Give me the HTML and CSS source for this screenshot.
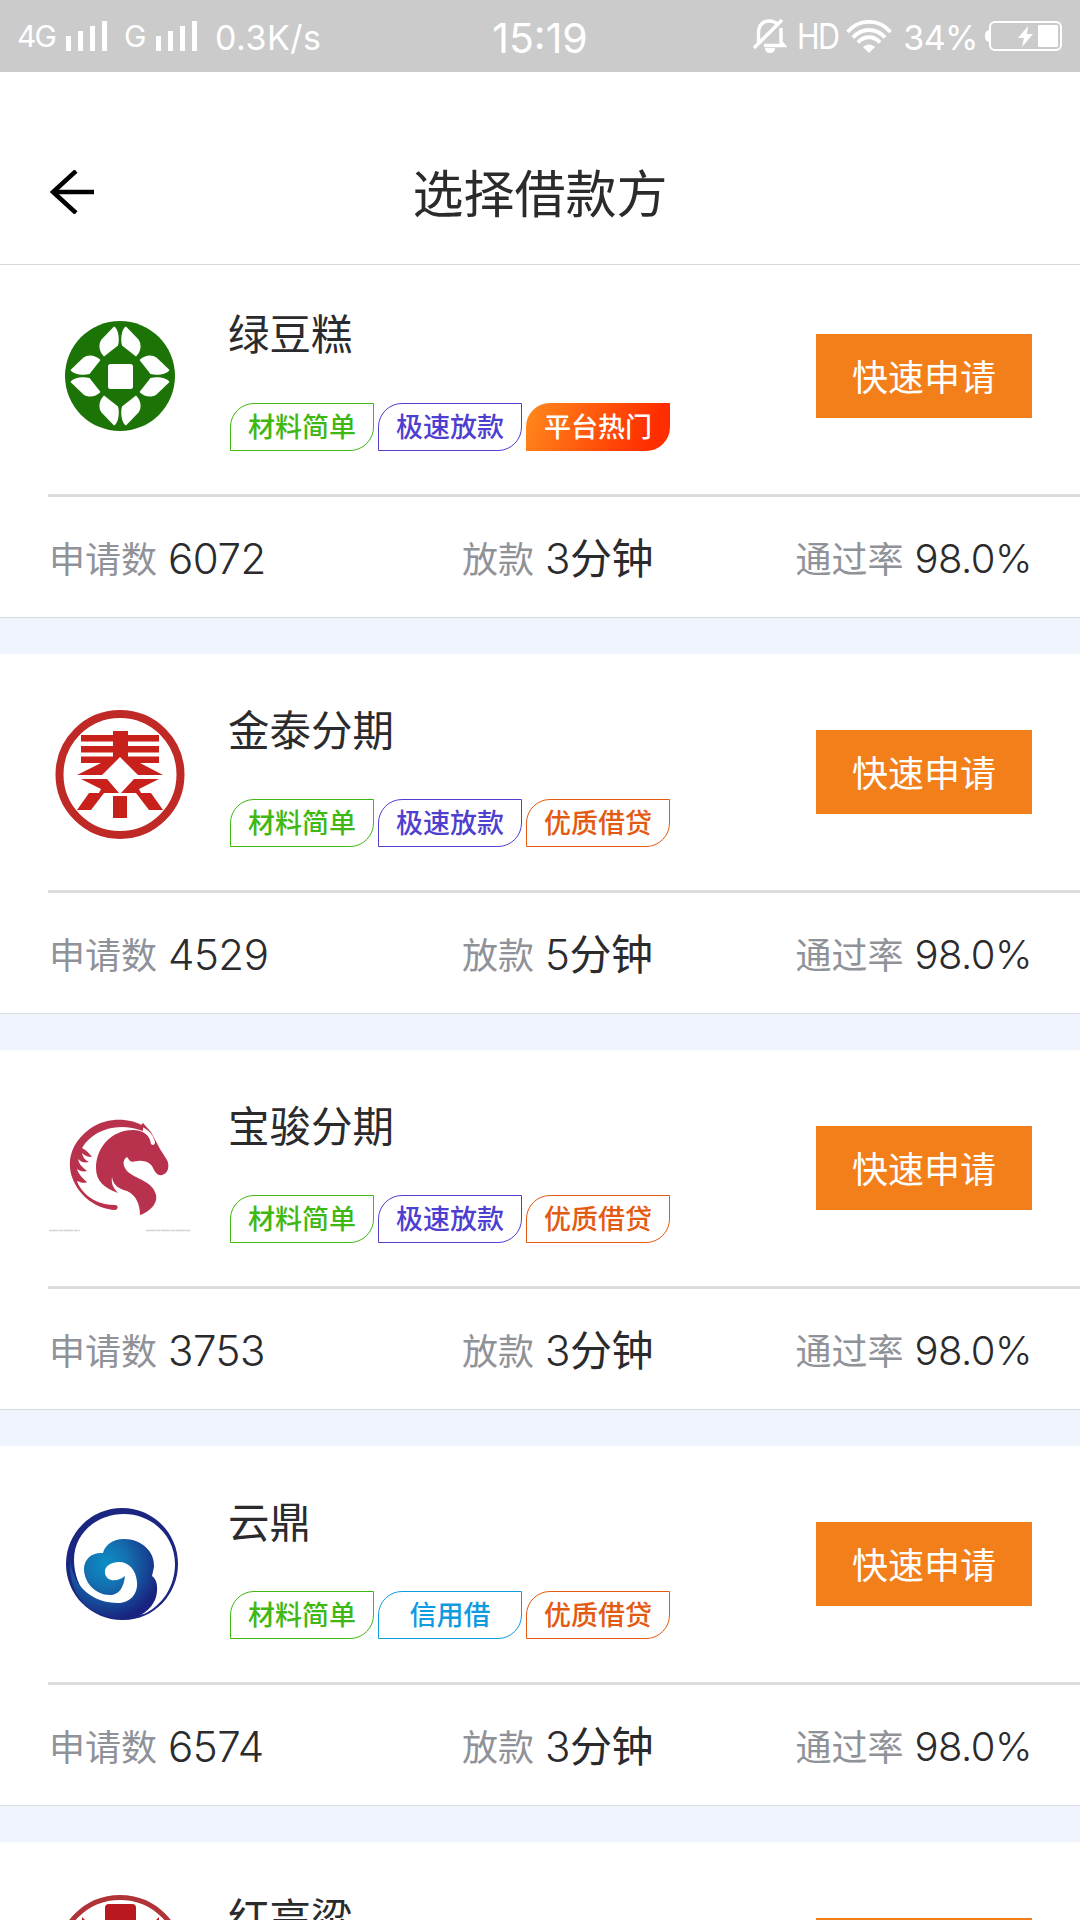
FILE: index.html
```html
<!DOCTYPE html>
<html lang="zh-CN">
<head>
    <meta charset="UTF-8">
    <meta name="viewport" content="width=device-width, initial-scale=1.0">
    <title>选择借款方</title>
    <link rel="stylesheet" href="styles.css">
</head>
<body>

<!-- status bar -->
<div class="status-bar">
    <div class="status-left">
        <span class="net">4G</span>
        <svg class="signal" width="42" height="30" viewBox="0 0 42 30"><path d="M0 15h5v15H0zM12 10h5v20h-5zM24 5h5v25h-5zM36 0h5v30h-5z"/></svg>
        <span class="net net-2">G</span>
        <svg class="signal" width="42" height="30" viewBox="0 0 42 30"><path d="M0 15h5v15H0zM12 10h5v20h-5zM24 5h5v25h-5zM36 0h5v30h-5z"/></svg>
        <span class="speed">0.3K/s</span>
    </div>
    <span class="clock">15:19</span>
    <div class="status-right">
        <svg class="bell" width="34" height="34" viewBox="0 0 34 34">
            <path d="M5.500 24V14C5.500 6 10 2 16 2c4 0 7 1.500 9 4M28 9v14l3 3.500H11" fill="none" stroke="#fff" stroke-width="3.400"/>
            <path d="M1 29L29 1" stroke="#fff" stroke-width="3.400"/>
            <path d="M12 29h10c0 3-2 5-5 5s-5-2-5-5z" fill="#fff"/>
        </svg>
        <span class="hd">HD</span>
        <svg class="wifi" width="46" height="33" viewBox="0 0 46 33">
            <g fill="none" stroke="#fff" stroke-width="3.800">
                <path d="M1.500 12C13-1.500 33-1.500 44.500 12"/>
                <path d="M7 17.500c9-10 23-10 32 0"/>
                <path d="M12 22.500c6-7 16-7 22 0"/>
            </g>
            <path d="M17 27c3.500-3.500 8.500-3.500 12 0l-6 6z" fill="#fff"/>
        </svg>
        <span class="percent">34%</span>
        <svg class="battery" width="78" height="30" viewBox="0 0 78 30">
            <rect x="5" y="1" width="71" height="28" rx="5" fill="none" stroke="#fff" stroke-width="2"/>
            <path d="M4 9v12C1 20 0 18.500 0 15s1-5 4-6z" fill="#fff"/>
            <rect x="53" y="4" width="20" height="22" rx="1" fill="#fff"/>
            <path d="M43 5L33 17h6l-2 9 11-13h-6z" fill="#fff"/>
        </svg>
    </div>
</div>

<header class="header">
    <svg class="back" width="46" height="44" viewBox="0 0 46 44">
        <path d="M27 1L4 22l23 21M3 22h42" fill="none" stroke="#000" stroke-width="4.500"/>
    </svg>
    <h1>选择借款方</h1>
</header>

<main class="list">
    <section class="card">
        <div class="card-top">
            <svg class="logo" viewBox="0 0 144 144">
                <circle cx="72" cy="72" r="55" fill="#1d7406"/>
                <rect x="60" y="60" width="25" height="25" rx="2.500" fill="#fff"/>
                <g fill="#fff">
                    <g id="leaf-pair">
                        <path d="M66 22.500c4 2 6 12 4 19L56 52.500c-5-5-6-12-2.500-17z"/>
                        <path d="M78 22.500c-4 2-6 12-4 19l14 11c5-5 6-12 2.500-17z"/>
                    </g>
                    <use href="#leaf-pair" transform="rotate(90 72 72)"/>
                    <use href="#leaf-pair" transform="rotate(180 72 72)"/>
                    <use href="#leaf-pair" transform="rotate(270 72 72)"/>
                </g>
            </svg>
            <div class="info">
                <h2>绿豆糕</h2>
                <div class="tags">
                    <span class="tag green">材料简单</span>
                    <span class="tag purple">极速放款</span>
                    <span class="tag hot">平台热门</span>
                </div>
            </div>
            <button class="apply">快速申请</button>
        </div>
        <div class="stats">
            <p>申请数<b>6072</b></p>
            <p>放款<b>3<i>分钟</i></b></p>
            <p>通过率<b class="rate">98.0%</b></p>
        </div>
    </section>

    <section class="card">
        <div class="card-top">
            <svg class="logo" viewBox="0 0 144 144">
                <circle cx="72" cy="74.500" r="60.500" fill="none" stroke="#c02a26" stroke-width="8"/>
                <g fill="#c8201b">
                    <path d="M65 31h15v4h31v6.500H80V46h31v6.500H80v4h31V63H92l23 12H90L72 57 54 75H29l24-12H33v-6.500h32v-4H33V46h32v-4.500H33V35h32z"/>
                    <path d="M33 79h26l12 14H51l2-4z"/>
                    <path d="M111 79H86L73 93h20l-2-4z"/>
                    <path d="M41 93h15l-13 17H29z"/>
                    <path d="M103 93H88l13 17h14z"/>
                    <path d="M65 96h14v22H65z"/>
                </g>
            </svg>
            <div class="info">
                <h2>金泰分期</h2>
                <div class="tags">
                    <span class="tag green">材料简单</span>
                    <span class="tag purple">极速放款</span>
                    <span class="tag orange">优质借贷</span>
                </div>
            </div>
            <button class="apply">快速申请</button>
        </div>
        <div class="stats">
            <p>申请数<b>4529</b></p>
            <p>放款<b>5<i>分钟</i></b></p>
            <p>通过率<b class="rate">98.0%</b></p>
        </div>
    </section>

    <section class="card">
        <div class="card-top">
            <svg class="logo" viewBox="0 0 144 144">
                <g fill="#b9324d">
                    <path d="M95 30C82 22 60 21 43 32 25 45 18 62 24 81c7 20 25 32 43 33 3 0 4-5 0-5-14 0-26-6-33-15-3-4-4-6-5-9 3 1 7 3 10 1-5-4-9-9-10-13 3 2 6 3 10 2-5-4-8-7-9-12 3 3 6 4 11 3-5-3-6-5-7-9 2 2 5 4 10 4-3-4-6-7-10-9 10-17 34-27 61-17z"/>
                    <path d="M92 30l3-3 8 9 9 17 7 11c3 6 1 14-5 15-4 1-6-2-8-5-2-6-7-9-12-9-5-1-9 2-12 0l-3-4c-5 3-4 9 0 14 8 8 26 10 29 24 2 9-7 17-16 20 0-11-4-20-13-24-7-2-14-5-15-14-1 6 1 11 6 16C56 92 48 85 48 72c0-20 15-38 37-38 10 0 17 5 18 14 2 2 4 1 4-2-2-8-6-12-15-16z"/>
                </g>
                <path d="M1 134.500h31M98 134.500h44" stroke="#d2d2d2" stroke-width="1.500" stroke-dasharray="9 .5 5 .5"/>
            </svg>
            <div class="info">
                <h2>宝骏分期</h2>
                <div class="tags">
                    <span class="tag green">材料简单</span>
                    <span class="tag purple">极速放款</span>
                    <span class="tag orange">优质借贷</span>
                </div>
            </div>
            <button class="apply">快速申请</button>
        </div>
        <div class="stats">
            <p>申请数<b>3753</b></p>
            <p>放款<b>3<i>分钟</i></b></p>
            <p>通过率<b class="rate">98.0%</b></p>
        </div>
    </section>

    <section class="card">
        <div class="card-top">
            <svg class="logo" viewBox="0 0 144 144">
                <defs>
                    <radialGradient id="cloud" gradientUnits="userSpaceOnUse" cx="58" cy="72" r="56">
                        <stop offset="0" stop-color="#0c8fc6"/>
                        <stop offset=".4" stop-color="#1470b0"/>
                        <stop offset="1" stop-color="#18247f"/>
                    </radialGradient>
                </defs>
                <path d="M74 16a56 56 0 0 0 0 112c31 1 56-25 56-56S105 16 74 16zm2 6c28 0 51 22 51 50 0 22-12 41-31 50l-22 3C45 119 26 95 26 68c0-27 23-46 50-46z" fill="#1a2680" fill-rule="evenodd"/>
                <path d="M22 68c3 28 24 43 48 43 13 0 20-10 19-21-1-12-8-20-18-20-9 0-15 5-14 11 1 8 11 10 20 3-1 11-6 19-15 19-15 0-26-13-26-26 0-10 8-17 19-16 2-8 10-14 21-14 18 0 31 13 30 28l-2 9c6 4 6 14 4 21-4 13-17 22-33 22C45 127 20 107 22 68z" fill="url(#cloud)"/>
            </svg>
            <div class="info">
                <h2>云鼎</h2>
                <div class="tags">
                    <span class="tag green">材料简单</span>
                    <span class="tag blue">信用借</span>
                    <span class="tag orange">优质借贷</span>
                </div>
            </div>
            <button class="apply">快速申请</button>
        </div>
        <div class="stats">
            <p>申请数<b>6574</b></p>
            <p>放款<b>3<i>分钟</i></b></p>
            <p>通过率<b class="rate">98.0%</b></p>
        </div>
    </section>

    <section class="card">
        <div class="card-top">
            <svg class="logo" viewBox="0 0 144 144">
                <circle cx="72" cy="71" r="61.500" fill="none" stroke="#b03338" stroke-width="5"/>
                <rect x="57" y="16" width="31" height="80" rx="4" fill="#b9181e"/>
                <path d="M34 29l6 6v50h-6zM111 29l-6 6v50h6z" fill="#b9181e"/>
            </svg>
            <div class="info">
                <h2>红高粱</h2>
            </div>
            <button class="apply">快速申请</button>
        </div>
    </section>
</main>

</body>
</html>
```

FILE: styles.css
```css
* {
    box-sizing: border-box;
    margin: 0;
    padding: 0;
}

body {
    width: 1080px;
    height: 1920px;
    overflow: hidden;
    background-color: #f0f4fc;
    color: #2b2b2e;
    font-family: Inter, "Noto Sans CJK SC", sans-serif;
}

/* status bar */
.status-bar {
    height: 72px;
    display: grid;
    grid-template-columns: 1fr auto 1fr;
    align-items: center;
    padding: 0 17px;
    background-color: #cbcbcb;
    color: #fff;
    white-space: nowrap;
}

.status-left,
.status-right {
    display: flex;
    align-items: center;
}

.status-right {
    justify-content: flex-end;
}

.signal {
    fill: #fff;
}

.net {
    width: 49px;
    font-size: 30px;
    letter-spacing: -2px;
}

.net-2 {
    width: 32px;
    margin-left: 16px;
}

.speed {
    margin-left: 17px;
    padding-top: 2px;
    font-size: 34px;
    letter-spacing: .5px;
}

.clock {
    font-size: 41px;
    padding-top: 3px;
}

.hd {
    margin: 0 5px 0 7px;
    font-size: 35px;
    font-weight: 400;
    letter-spacing: -2px;
    transform: scaleX(.87);
}

.percent {
    margin: 0 7px 0 11px;
    padding-top: 2px;
    font-size: 34px;
    letter-spacing: -.5px;
}

/* header */
.header {
    position: relative;
    z-index: 1;
    height: 193px;
    display: grid;
    grid-template-columns: 46px 1fr 46px;
    align-items: center;
    padding: 48px 49px 0;
    border-bottom: 1px solid #d8d8d8;
    background-color: #fff;
}

.header h1 {
    padding-top: 5px;
    font-size: 51px;
    font-weight: 400;
    line-height: 72px;
    text-align: center;
}

/* list */
.list {
    margin-top: -7px;
}

.card {
    height: 360px;
    margin-bottom: 36px;
    border-bottom: 1px solid #d5dde2;
    background-color: #fff;
}

.card-top {
    height: 239px;
    display: flex;
    align-items: flex-start;
    margin-left: 48px;
    padding-right: 48px;
    border-bottom: 3px solid #dcdcdc;
}

.logo {
    width: 144px;
    height: 144px;
    margin-top: 46px;
}

.info {
    flex: 1;
    padding: 47px 0 0 36px;
}

.info h2 {
    height: 98px;
    font-size: 41.5px;
    font-weight: 400;
    line-height: 60px;
}

.tags {
    display: flex;
    gap: 4px;
    margin-left: 2px;
}

.tag {
    width: 144px;
    height: 48px;
    border: 1px solid currentColor;
    border-radius: 24px 0 24px 0;
    font-size: 27px;
    font-weight: 500;
    line-height: 47px;
    text-align: center;
}

.green {
    color: #3fb814;
}

.purple {
    color: #4f3fd0;
}

.orange {
    color: #e35a12;
}

.blue {
    color: #0f9be0;
}

.hot {
    border: none;
    background: linear-gradient(110deg, #ff8a1c, #ff2e00 85%);
    color: #fff;
    line-height: 49px;
}

.apply {
    width: 216px;
    height: 84px;
    margin-top: 76px;
    padding-top: 5px;
    border: none;
    background-color: #f27f19;
    color: #fff;
    font-family: inherit;
    font-size: 36px;
    line-height: 79px;
}

.stats {
    height: 120px;
    display: grid;
    grid-template-columns: 413px 1fr auto;
    align-items: center;
    padding: 0 48px 0 49px;
}

.stats p {
    display: flex;
    align-items: center;
    color: #8f9298;
    font-size: 36px;
}

.stats b {
    margin-left: 11px;
    padding-top: 4px;
    color: #2b2b2e;
    font-size: 42px;
    font-weight: 350;
    line-height: 60px;
    letter-spacing: -.5px;
}

.stats i {
    font-size: 42px;
    font-style: normal;
    font-weight: 400;
    line-height: 0;
}

.stats .rate {
    font-size: 40px;
}
```
